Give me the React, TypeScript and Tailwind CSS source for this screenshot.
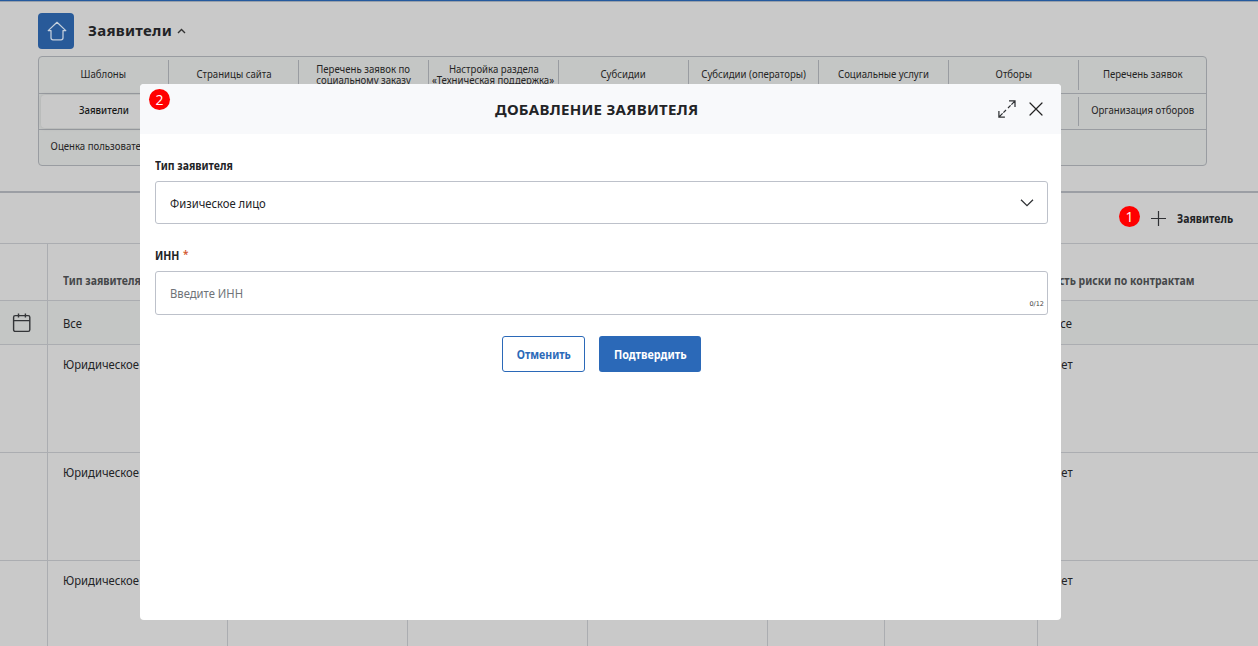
import { ReactNode } from "react";

const navRows: string[][][] = [
  [
    ["Шаблоны"],
    ["Страницы сайта"],
    ["Перечень заявок по", "социальному заказу"],
    ["Настройка раздела", "«Техническая поддержка»"],
    ["Субсидии"],
    ["Субсидии (операторы)"],
    ["Социальные услуги"],
    ["Отборы"],
    ["Перечень заявок"],
  ],
  [["Заявители"], [], [], [], [], [], [], [], ["Организация отборов"]],
  [["Оценка пользователей"]],
];

const dataRows = ["Юридическое лицо", "Юридическое лицо", "Юридическое лицо"];

function Body({ children }: { children: ReactNode }) {
  return <span className="block origin-left scale-x-90 whitespace-nowrap text-[12.5px] leading-4">{children}</span>;
}

function Strong({ children }: { children: ReactNode }) {
  return <span className="block origin-left scale-x-[0.873] whitespace-nowrap text-xs leading-4 font-bold">{children}</span>;
}

function Badge({ children, className }: { children: ReactNode; className: string }) {
  return (
    <span className={`absolute flex size-[21px] items-center justify-center rounded-full bg-[#ff0000] font-['Open_Sans',sans-serif] text-[14px] leading-none text-white ${className}`}>
      {children}
    </span>
  );
}

function Nav() {
  return (
    <nav className="mx-[38px] mt-[7px] h-[110px] w-[1169px] rounded border border-[#999ca1] bg-[#c4c6c5]">
      {navRows.map((row, r) => (
        <div key={r} className={`flex ${r === 0 ? "h-[37px] border-b" : r === 1 ? "h-9 border-b" : "h-[35px]"} border-[#999ca1] py-[3px]`}>
          {row.map((lines, c) => {
            const active = lines[0] === "Заявители";
            return (
              <div
                key={c}
                className={`flex shrink-0 flex-col items-center justify-center ${r === 0 ? "pb-[3px]" : "pb-[5px]"} ${
                  active
                    ? "-my-0.5 ml-0.5 w-[128px] rounded bg-[#c9c9c9] pr-0.5 shadow-[0_0_4px_rgba(0,0,0,0.12)]"
                    : c === 8
                      ? "w-[128px]"
                      : c < row.length - 1
                        ? "w-[130px] border-r border-[#999ca1]"
                        : "w-[130px]"
                }`}
              >
                {lines.map((l) => (
                  <span key={l} className={`scale-x-[0.835] whitespace-nowrap text-[11.5px] leading-[11px] ${active ? "font-medium text-[#161616]" : "text-[#242424]"}`}>
                    {l}
                  </span>
                ))}
              </div>
            );
          })}
        </div>
      ))}
    </nav>
  );
}

function Table() {
  const cols = "grid grid-cols-[48px_180px_180px_180px_180px_117px_153px_1fr] divide-x divide-[#abadb1] border-b border-[#abadb1]";
  const empty = [0, 1, 2, 3, 4];
  return (
    <div>
      <div className={`${cols} h-[57px] text-[#454749]`}>
        <div />
        <div className="pt-[29px] pl-[15px]"><Strong>Тип заявителя</Strong></div>
        {empty.map((i) => <div key={i} />)}
        <div className="pt-[29px] pl-[15px]"><Strong>Есть риски по контрактам</Strong></div>
      </div>
      <div className={`${cols} h-11 bg-[#c4c6c5]`}>
        <div className="pt-3 pl-3">
          <svg width="20" height="21" viewBox="0 0 20 21" fill="none" stroke="#333538" strokeWidth="1.4">
            <rect x="1.6" y="2.6" width="16.2" height="15.8" rx="1.6" />
            <path d="M1.6 7.6H17.8M6.5 .4v4M13.4.4v4" />
          </svg>
        </div>
        <div className="pt-[15px] pl-[15px]"><Body>Все</Body></div>
        {empty.map((i) => <div key={i} />)}
        <div className="pt-[15px] pl-[15px]"><Body>Все</Body></div>
      </div>
      {dataRows.map((type, i) => (
        <div key={i} className={`${cols} h-[108px]`}>
          <div />
          <div className="pt-3 pl-[15px]"><Body>{type}</Body></div>
          {empty.map((n) => <div key={n} />)}
          <div className="pt-3 pl-[15px]"><Body>Нет</Body></div>
        </div>
      ))}
    </div>
  );
}

function Modal() {
  return (
    <section className="absolute top-[84px] left-[140px] h-[536px] w-[921px] overflow-hidden rounded bg-white">
      <Badge className="top-[5px] left-[9px]">2</Badge>
      <header className="flex h-[50px] items-center bg-[#f8f9fb] pr-[18px] pb-px">
        <h2 className="ml-[355px] w-[204px] text-[15px] leading-5 font-bold tracking-[0.27px] whitespace-nowrap">ДОБАВЛЕНИЕ ЗАЯВИТЕЛЯ</h2>
        <svg className="ml-auto" width="18" height="18" viewBox="0 0 18 18" fill="none" stroke="#303235" strokeWidth="1.25">
          <path d="m10 8 2.6-2.6M13.4 4.6 16.6 1.4M11 .9h6v6M8 10l-2.6 2.6M4.6 13.4 1.4 16.6M.9 11v6h6" />
        </svg>
        <svg className="ml-[13px]" width="14" height="14" viewBox="0 0 14 14" fill="none" stroke="#222" strokeWidth="1.2" strokeLinecap="round">
          <path d="m1 1 12 12M13 1 1 13" />
        </svg>
      </header>
      <div className="flex flex-col pr-[13px] pl-[15px]">
        <label className="mt-6 h-[23px]"><Strong>Тип заявителя</Strong></label>
        <div className="flex h-[43px] items-center justify-between rounded-[3px] border border-[#bdc1ca] pt-0.5 pr-[13px] pl-[14px]">
          <Body>Физическое лицо</Body>
          <svg className="mb-0.5" width="14" height="8" viewBox="0 0 14 8" fill="none" stroke="#303235" strokeWidth="1.3">
            <path d="m1 .8 6 5.8L13 .8" />
          </svg>
        </div>
        <label className="mt-6 flex h-[23px]">
          <Strong>ИНН</Strong>
          <span className="text-[10px] leading-[13px] font-semibold text-[#d2562f]">*</span>
        </label>
        <div className="flex h-11 items-center justify-between rounded-[3px] border border-[#bdc1ca] pt-px pr-[3px] pl-[14px] text-[#6f7378]">
          <Body>Введите ИНН</Body>
          <span className="mt-[22px] font-['DejaVu_Sans',sans-serif] text-[6.5px] leading-none text-[#444]">0/12</span>
        </div>
        <div className="mt-[21px] flex justify-center gap-[14px]">
          <button className="flex h-9 w-[83px] items-center justify-center rounded-[3px] border border-[#2b69b8] pt-0.5 text-[#2b69b8]">
            <span className="scale-x-[0.88] text-xs font-bold">Отменить</span>
          </button>
          <button className="flex h-9 w-[102px] items-center justify-center rounded-[3px] bg-[#2b69b8] pt-0.5 text-white">
            <span className="scale-x-[0.9] text-xs font-bold">Подтвердить</span>
          </button>
        </div>
      </div>
    </section>
  );
}

export default function App() {
  return (
    <div className="relative h-[646px] w-[1258px] overflow-hidden bg-[#c9c9c9] font-['Noto_Sans',sans-serif] text-[#222326]">
      <div className="h-0.5 border-b border-[#98a0ab] bg-[#255a9e]" />
      <div className="mt-[11px] ml-[38px] flex h-9 items-center">
        <div className="flex size-9 items-center justify-center rounded bg-[#285a99]">
          <svg className="ml-px" width="20" height="20" viewBox="0 0 20 20" fill="none" stroke="#c5d0dd" strokeWidth="1.25" strokeLinecap="round" strokeLinejoin="round">
            <path d="M4 9.6H1.2L10 1.3l8.8 8.3H16v7.2a2 2 0 0 1-2 2H6a2 2 0 0 1-2-2V9.6" />
          </svg>
        </div>
        <h1 className="mb-0.5 ml-[14px] text-[15px] leading-5 font-bold tracking-[0.27px]">Заявители</h1>
        <svg className="ml-[5px]" width="9" height="6" viewBox="0 0 9 6" fill="none" stroke="#333" strokeWidth="1.4">
          <path d="m1 5 3.5-3.5L8 5" />
        </svg>
      </div>
      <Nav />
      <div className="mt-[25px] flex h-[53px] items-center border-t-2 border-b border-t-[#9b9ea4] border-b-[#abadb1]">
        <div className="ml-[1151px] flex items-center">
          <svg width="15" height="15" viewBox="0 0 15 15" stroke="#2f3034" strokeWidth="1.2">
            <path d="M7.5 0v15M0 7.5h15" />
          </svg>
          <span className="mt-0.5 ml-[11px] flex"><Strong>Заявитель</Strong></span>
        </div>
      </div>
      <Table />
      <Badge className="top-[206px] left-[1119px]">1</Badge>
      <Modal />
    </div>
  );
}
